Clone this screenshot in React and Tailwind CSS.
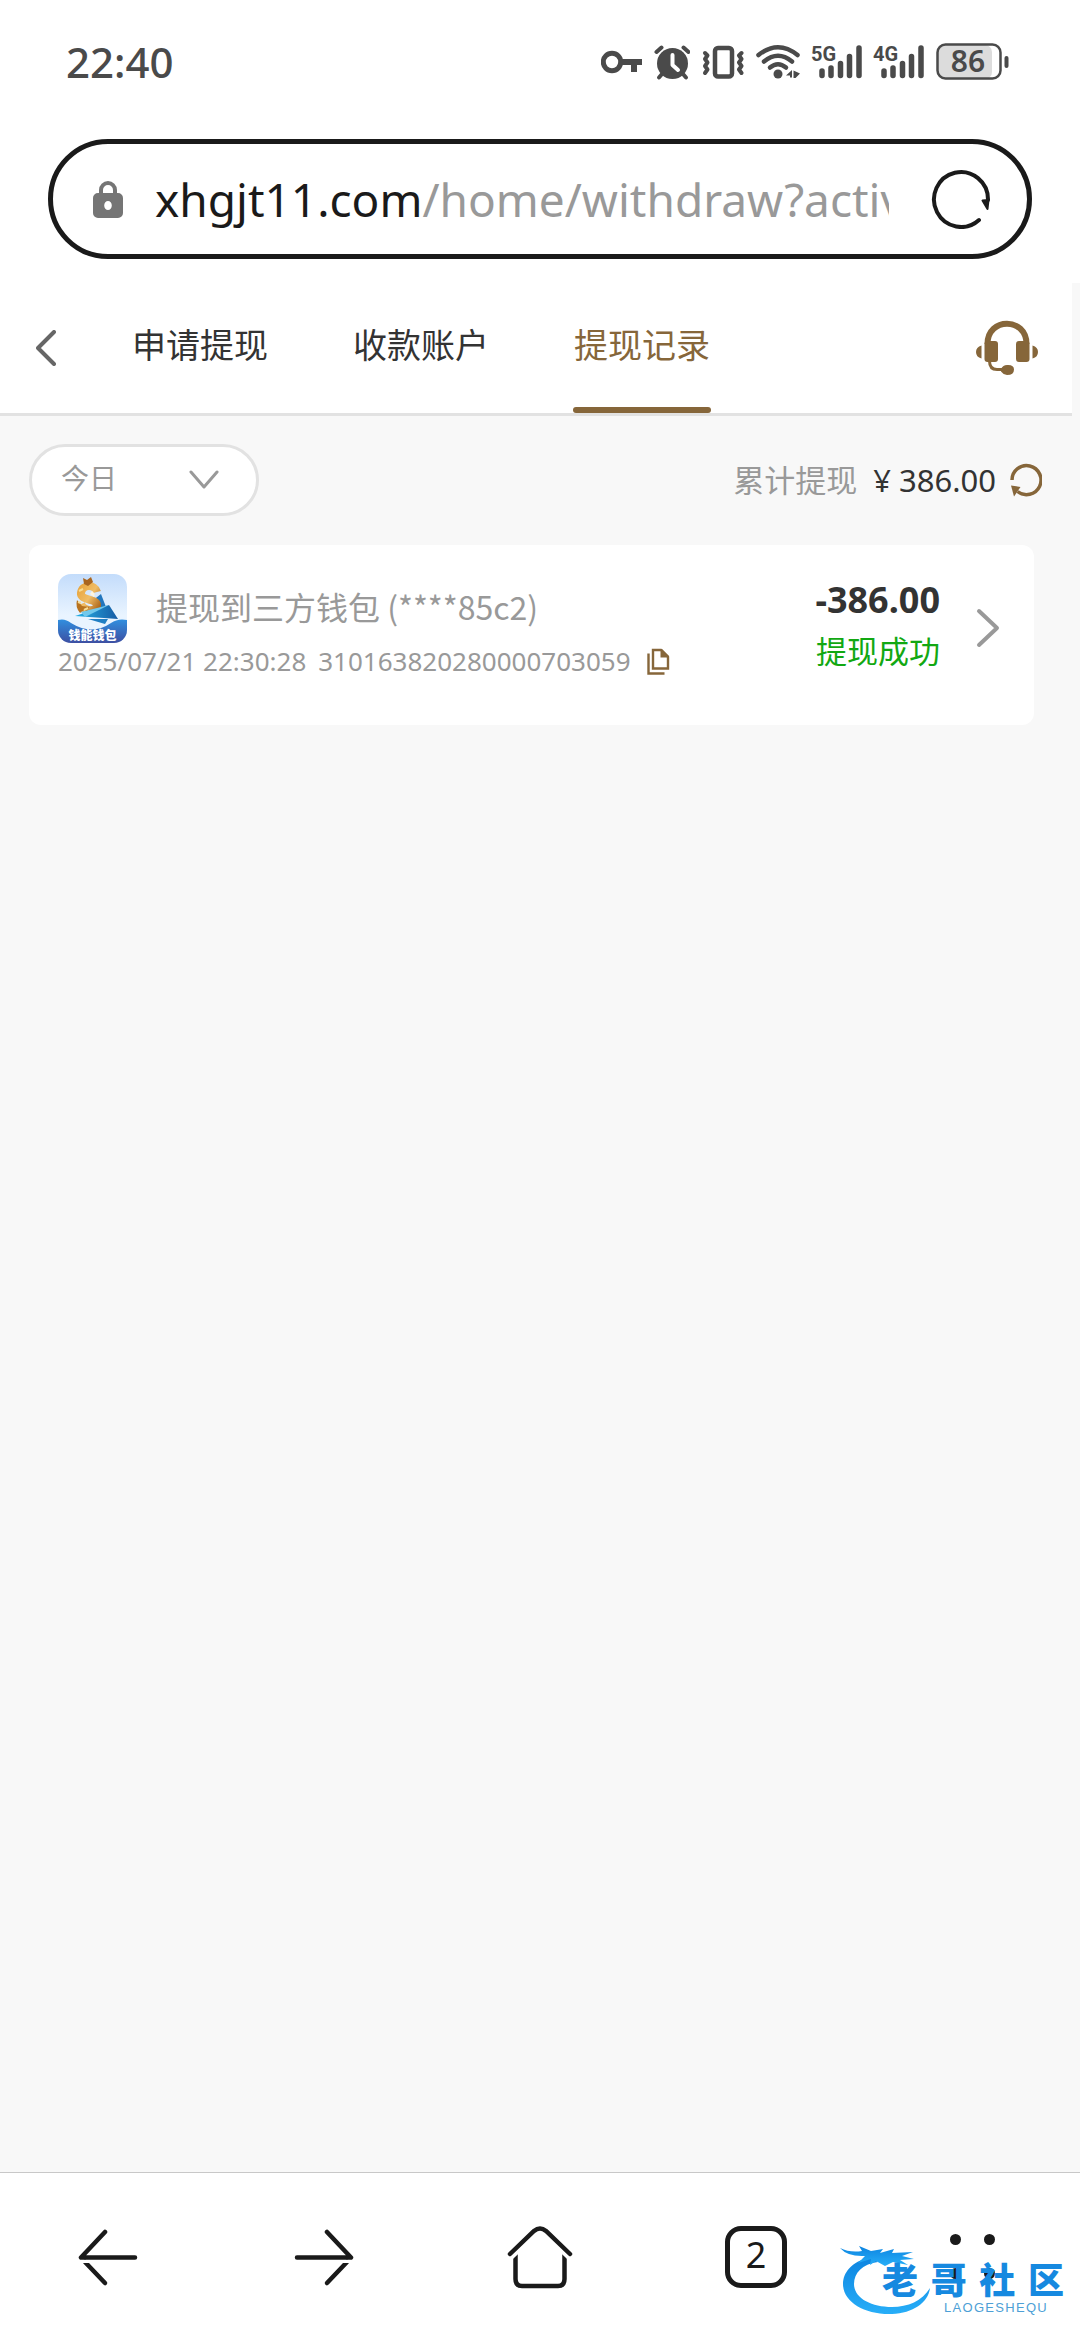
import React from "react";

const INK = "#1a1a1a";
const STATUS = "#4a4a4a";
const GOLD = "#86663a";

function KeyIcon() {
  return (
    <svg width="41" height="40" viewBox="0 0 41 40" fill="none" stroke={STATUS}>
      <circle cx="11" cy="20" r="8.7" strokeWidth="5" />
      <path d="M20 20H41" strokeWidth="6" />
      <path d="M33 20V30" strokeWidth="6" />
    </svg>
  );
}

function AlarmIcon() {
  return (
    <svg width="36" height="40" viewBox="0 0 36 40" fill="none" stroke={STATUS} strokeLinecap="round">
      <circle cx="18.5" cy="21.5" r="15.5" fill={STATUS} stroke="none" />
      <path d="M2.5 10L7.5 5.5M34.5 10L29.5 5.5" strokeWidth="4" />
      <path d="M8 32L5 35.5M29 32L32 35.5" strokeWidth="4" />
      <path d="M18.5 13V23L24 28" stroke="#fff" strokeWidth="4" strokeLinejoin="round" />
    </svg>
  );
}

function VibrateIcon() {
  return (
    <svg width="42" height="40" viewBox="0 0 42 40" fill="none" stroke={STATUS} strokeLinejoin="round" strokeLinecap="round">
      <rect x="13" y="6" width="17" height="28.5" rx="3" strokeWidth="4.5" />
      <path d="M3 11L5.5 13.5L3 17L5.5 20.5L3 24L5.5 27.5L3 31" strokeWidth="4" />
      <path d="M39.5 11L37 13.5L39.5 17L37 20.5L39.5 24L37 27.5L39.5 31" strokeWidth="4" />
    </svg>
  );
}

function WifiIcon() {
  return (
    <svg width="44" height="40" viewBox="0 0 44 40" fill="none" stroke={STATUS} strokeWidth="4.5" strokeLinecap="round">
      <path d="M2.5 13Q22 -2.5 41.5 13" />
      <path d="M8 19.5Q22 8 36 19.5" />
      <path d="M14 25.5Q22 19 30 25.5" />
      <circle cx="22" cy="32" r="4.5" fill={STATUS} stroke="none" />
      <path d="M30 33.5L36 28V35.5H34V33.5ZM37.5 28.5L44 31.5L39.5 36H37.5Z" fill={STATUS} stroke="none" />
    </svg>
  );
}

function Signal({ label }) {
  return (
    <svg width="50" height="40" viewBox="0 0 50 40" role="img" aria-label={label} className="overflow-visible">
      <text x="-1" y="19" fontSize="20" fontWeight="700" fill={STATUS} fontFamily="Roboto, sans-serif">
        {label}
      </text>
      <g stroke={STATUS} strokeWidth="5.5" strokeLinecap="round">
        <path d="M10 29V33.5M19 26V33.5M28.5 21.5V33.5M37.5 14.5V33.5M47 6V33.5" />
      </g>
    </svg>
  );
}

function Battery() {
  return (
    <svg width="73" height="40" viewBox="0 0 73 40" role="img" aria-label="86%" className="overflow-visible">
      <rect x="2" y="3" width="54" height="34" rx="7" fill="#dcdcdc" />
      <rect x="1.5" y="2.5" width="63" height="34" rx="8" fill="none" stroke={STATUS} strokeWidth="2.5" />
      <path d="M70.5 16V24" stroke={STATUS} strokeWidth="4" strokeLinecap="round" />
      <text x="32" y="30" textAnchor="middle" fontSize="30" fontWeight="600" fill={STATUS} fontFamily="'Noto Sans', sans-serif">
        86
      </text>
    </svg>
  );
}

function LockIcon() {
  return (
    <svg width="30" height="40" viewBox="0 0 30 40">
      <path d="M8 16V11A7 7 0 0 1 22 11V16" fill="none" stroke="#757575" strokeWidth="4" />
      <path fillRule="evenodd" fill="#757575" d="M5 14H25A5 5 0 0 1 30 19V34A5 5 0 0 1 25 39H5A5 5 0 0 1 0 34V19A5 5 0 0 1 5 14ZM15 22A3.8 4.5 0 0 0 15 31A3.8 4.5 0 0 0 15 22Z" />
    </svg>
  );
}

function ReloadIcon() {
  return (
    <svg width="60" height="60" viewBox="0 0 60 60" fill="none" stroke={INK} strokeWidth="4" strokeLinecap="round">
      <path d="M48 51A27 27.5 0 1 1 57 31" />
      <path d="M51.5 31.5L57.5 31L56.5 40Z" fill={INK} strokeWidth="2" strokeLinejoin="round" />
    </svg>
  );
}

function HeadsetIcon() {
  return (
    <svg width="62" height="56" viewBox="0 0 62 56" fill={GOLD}>
      <path d="M11.5 24C11.5 -3 50.5 -3 50.5 24" fill="none" stroke={GOLD} strokeWidth="6" />
      <rect x="8.5" y="21" width="13.5" height="21" rx="3" />
      <rect x="40" y="21" width="13.5" height="21" rx="3" />
      <path d="M5.5 25.5V38.5Q0 37 0 32Q0 27 5.5 25.5ZM56.5 25.5V38.5Q62 37 62 32Q62 27 56.5 25.5Z" />
      <path d="M13.5 41Q13.5 49.5 21 49.5H28" fill="none" stroke={GOLD} strokeWidth="3" />
      <path d="M25 49Q27 45 31 45Q38 44.5 38 49.5Q38 55 31 55Q27 54.5 25 51.5Z" />
    </svg>
  );
}

function WalletLogo() {
  return (
    <svg width="69" height="69" viewBox="0 0 69 69" role="img" aria-label="钱能钱包" className="shrink-0">
      <defs>
        <clipPath id="tile"><rect width="69" height="69" rx="13" /></clipPath>
        <linearGradient id="sky" x1="0" y1="0" x2="0" y2="1">
          <stop offset="0" stopColor="#c3dcfb" />
          <stop offset="0.6" stopColor="#e9f4ff" />
        </linearGradient>
        <linearGradient id="sea" x1="0" y1="0" x2="0" y2="1">
          <stop offset="0" stopColor="#318fdf" />
          <stop offset="1" stopColor="#3d4fa2" />
        </linearGradient>
        <linearGradient id="coin" x1="0" y1="0" x2="1" y2="1">
          <stop offset="0" stopColor="#e9a843" />
          <stop offset="0.5" stopColor="#f0bd66" />
          <stop offset="1" stopColor="#b06a1d" />
        </linearGradient>
        <linearGradient id="boat" x1="0" y1="0" x2="1" y2="0">
          <stop offset="0" stopColor="#27b2e6" />
          <stop offset="1" stopColor="#155ba5" />
        </linearGradient>
      </defs>
      <g clipPath="url(#tile)">
        <rect width="69" height="69" fill="url(#sky)" />
        <path d="M34 27L43 20L48 33L38 38Z" fill="#2276bd" />
        <path d="M39 18C37 10 24 10 23 19C22 27 39 24 39 31C39 38 26 38 23 30" fill="none" stroke="url(#coin)" strokeWidth="8" />
        <path d="M25 4L29 6L33 3L35 8L30 12L26 10Z" fill="#a9651f" />
        <path d="M19 26Q17 33 22 39L26 36L29 39L31 33L24 32Z" fill="#b8731f" />
        <path d="M21 17L25 15M20 28L23 29M26 36L30 34" stroke="#f8dc93" strokeWidth="2" />
        <path d="M34 17Q38 20 36 23L32 20Z" fill="#fff5de" />
        <path d="M17 42L51 31L60 45Z" fill="url(#boat)" />
        <path d="M23 38L51 31L27 43Z" fill="#71c8ec" />
        <path d="M30 45H50L47 50Z" fill="#207fc4" />
        <path d="M0 46Q7 44 13 49Q34 62 53 49Q60 44 69 46V69H0Z" fill="url(#sea)" />
        <text x="34.5" y="66" textAnchor="middle" fontSize="12" fontWeight="900" fill="#fff" fontFamily="'Noto Sans CJK SC', sans-serif">
          钱能钱包
        </text>
      </g>
    </svg>
  );
}

function CopyIcon() {
  return (
    <svg width="23" height="27" viewBox="0 0 23 27" fill="none" stroke={GOLD} strokeWidth="2.4">
      <path d="M6 2H14L21 9V20.5H6Z" />
      <path d="M13.5 1H15L22 8V9.5H13.5Z" fill={GOLD} stroke="none" />
      <path d="M1.5 5.5V25.5H17.5" />
    </svg>
  );
}

function Watermark() {
  return (
    <div className="pointer-events-none absolute right-4 bottom-6 h-[72px] w-[224px] font-['Noto_Sans_CJK_SC',sans-serif]">
      <svg width="224" height="72" viewBox="0 0 224 72" className="absolute inset-0">
        <defs>
          <linearGradient id="dragon" x1="0" y1="0" x2="0" y2="1">
            <stop offset="0" stopColor="#0d84e0" />
            <stop offset="1" stopColor="#27aef8" />
          </linearGradient>
        </defs>
        <g fill="url(#dragon)">
          <path d="M30 13C11 18 3 29 3 40C3 58 25 71 52 70C73 69 88 59 90 44C82 57 68 63 52 63C31 63 14 54 14 40C14 29 22 20 38 18Z" />
          <path d="M0 4Q10 9 22 7L19 2L31 7L43 5L40 9L54 5L52 9L73 8L62 12L74 15L60 16L68 21L53 18L45 22L36 17L30 21L31 15L18 19L25 12Q8 13 0 4Z" />
        </g>
      </svg>
      <div className="absolute right-0 bottom-[18px] flex w-[182px] justify-between text-[36px] leading-10 font-black text-[#1689e0]">
        <span>老</span>
        <span>哥</span>
        <span>社</span>
        <span>区</span>
      </div>
      <div className="absolute right-4 bottom-0.5 font-['Liberation_Sans',sans-serif] text-[13px] leading-3 tracking-widest text-[#4d9fd6]">
        LAOGESHEQU
      </div>
    </div>
  );
}

const tabs = ["申请提现", "收款账户", "提现记录"];

export default function App() {
  return (
    <div className="flex min-h-screen flex-col bg-white font-['Noto_Sans','Noto_Sans_CJK_SC',sans-serif] text-[#333333]">
      <div className="flex h-[123px] items-center justify-between pr-[71px] pl-[66px]">
        <span className="text-[42px] leading-none font-medium text-[#4a4a4a]">22:40</span>
        <div className="flex items-center gap-3">
          <KeyIcon />
          <AlarmIcon />
          <VibrateIcon />
          <WifiIcon />
          <Signal label="5G" />
          <Signal label="4G" />
          <Battery />
        </div>
      </div>

      <div className="mx-12 mt-4 mb-6 flex h-[120px] items-center rounded-full border-[5px] border-[#1a1a1a] pr-9 pl-10">
        <LockIcon />
        <button type="button" className="ml-8 min-w-0 flex-1 overflow-hidden text-left text-[46px] leading-[72px] whitespace-nowrap text-[#999999]">
          <span className="text-[#1a1a1a]">xhgjt11.com</span>/home/withdraw?activ
        </button>
        <button type="button" aria-label="刷新" className="ml-[42px]">
          <ReloadIcon />
        </button>
      </div>

      <main className="flex flex-1 flex-col bg-[#f8f8f8] pr-2">
        <header className="flex items-center border-b-[3px] border-[#e2e2e2] bg-white pr-[34px] pl-9">
          <button type="button" aria-label="返回">
            <svg width="20" height="36" viewBox="0 0 20 36" fill="none" stroke="#666" strokeWidth="4" strokeLinecap="round" strokeLinejoin="round">
              <path d="M18 2L2 18L18 34" />
            </svg>
          </button>
          <nav className="ml-[75px] flex gap-[83px]">
            {tabs.map((t, i) => (
              <button key={t} type="button" className={i === 2 ? "w-[138px] text-[#86663a]" : "w-[138px]"}>
                <span className="block text-[34px] leading-[124px] whitespace-nowrap">{t}</span>
                <span className={i === 2 ? "block h-1.5 rounded-full bg-[#86663a]" : "block h-1.5"} />
              </button>
            ))}
          </nav>
          <button type="button" aria-label="客服" className="ml-auto">
            <HeadsetIcon />
          </button>
        </header>

        <div className="flex items-center justify-between pt-7 pr-[30px] pl-[29px]">
          <div className="relative">
            <select aria-label="日期" className="h-[72px] w-[230px] appearance-none rounded-full border-[3px] border-[#e2e2e2] bg-white pb-1 pl-[29px] text-[28px] text-[#999999]">
              <option>今日</option>
            </select>
            <svg width="30" height="20" viewBox="0 0 30 20" fill="none" stroke="#999" strokeWidth="3" strokeLinecap="round" strokeLinejoin="round" className="pointer-events-none absolute top-[26px] right-10">
              <path d="M2 2L15 17L28 2" />
            </svg>
          </div>
          <div className="flex items-center text-[31px] leading-10">
            <span className="text-[#999999]">累计提现</span>
            <span className="ml-4 flex">
              <span>¥</span>
              <span className="ml-2">386.00</span>
            </span>
            <button type="button" aria-label="刷新金额" className="ml-3.5">
              <svg width="32" height="34" viewBox="0 0 32 34">
                <path d="M2 17A14.5 14.5 0 1 1 7.5 28.5" fill="none" stroke={GOLD} strokeWidth="3.5" />
                <path d="M1 22.5L10.5 24L4 33.5Z" fill={GOLD} />
              </svg>
            </button>
          </div>
        </div>

        <article className="mt-[29px] mr-[38px] ml-[29px] flex min-h-[180px] items-start rounded-xl bg-white pt-[29px] pr-8 pl-[29px]">
          <div className="flex-1 text-[#999999]">
            <div className="flex items-center">
              <WalletLogo />
              <h2 className="ml-[29px] pb-1.5 font-['Noto_Sans_CJK_SC',sans-serif] text-[32px] leading-10">提现到三方钱包 (****85c2)</h2>
            </div>
            <div className="flex items-center text-[26px] leading-9">
              <time>2025/07/21 22:30:28</time>
              <span className="ml-3">310163820280000703059</span>
              <button type="button" aria-label="复制" className="ml-4">
                <CopyIcon />
              </button>
            </div>
          </div>
          <div className="flex items-center">
            <div className="text-right">
              <div className="text-[36px] leading-[52px] font-bold">-386.00</div>
              <div className="text-[31px] leading-[50px] text-[#12a812]">提现成功</div>
            </div>
            <button type="button" aria-label="详情" className="ml-9">
              <svg width="26" height="46" viewBox="0 0 26 46" fill="none" stroke="#999" strokeWidth="4" strokeLinecap="round" strokeLinejoin="round">
                <path d="M3 9L21 26L3 43" />
              </svg>
            </button>
          </div>
        </article>
      </main>

      <footer className="relative border-t border-[#c8c8c8] bg-white">
        <nav className="grid h-[167px] grid-cols-5 place-items-center">
          <button type="button" aria-label="后退">
            <svg width="60" height="64" viewBox="0 0 60 64" fill="none" stroke={INK} strokeWidth="4.5" strokeLinecap="round" strokeLinejoin="round">
              <path d="M27 7L3 32.5H57" />
              <path d="M27 58L7 37" />
              <path d="M2 36.5H14" stroke="#fff" strokeWidth="3" strokeLinecap="butt" />
            </svg>
          </button>
          <button type="button" aria-label="前进">
            <svg width="60" height="64" viewBox="0 0 60 64" fill="none" stroke={INK} strokeWidth="4.5" strokeLinecap="round" strokeLinejoin="round">
              <path d="M33 7L57 32.5H3" />
              <path d="M33 58L53 37" />
              <path d="M58 36.5H46" stroke="#fff" strokeWidth="3" strokeLinecap="butt" />
            </svg>
          </button>
          <button type="button" aria-label="主页">
            <svg width="66" height="64" viewBox="0 0 66 64" fill="none" stroke={INK} strokeWidth="4.5">
              <path d="M8.5 29V54Q8.5 61 15 61H51Q57.5 61 57.5 54V29" />
              <path d="M1.5 32L11 23M64.5 32L55 23" stroke="#fff" strokeWidth="9" />
              <path d="M3 29L27 6Q33 1 39 6L63 29" strokeLinecap="round" />
            </svg>
          </button>
          <button type="button" aria-label="标签页" className="flex size-[62px] items-center justify-center rounded-2xl border-[5px] border-[#1a1a1a] pb-1 text-[36px] leading-none text-[#1a1a1a]">
            2
          </button>
          <button type="button" aria-label="菜单" className="grid size-[45px] grid-cols-2 content-between justify-between">
            <span className="size-[11px] rounded-full bg-[#1a1a1a]" />
            <span className="size-[11px] justify-self-end rounded-full bg-[#1a1a1a]" />
            <span className="size-[11px] rounded-full bg-[#1a1a1a]" />
            <span className="size-[11px] justify-self-end rounded-full bg-[#1a1a1a]" />
          </button>
        </nav>
        <Watermark />
      </footer>
    </div>
  );
}
